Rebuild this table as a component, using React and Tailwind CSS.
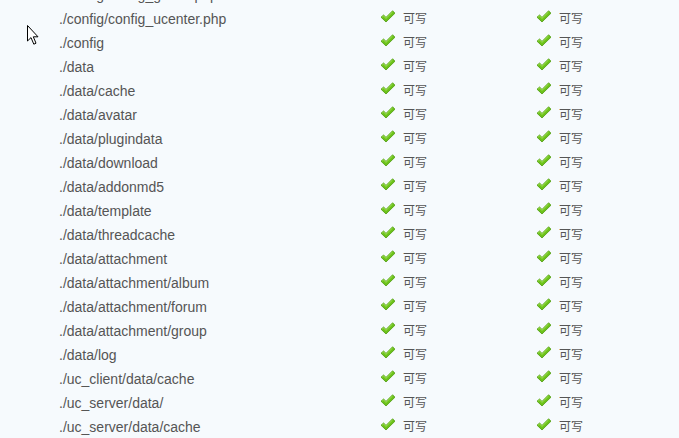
const ROWS = [
  "./config/config_global.php",
  "./config/config_ucenter.php",
  "./config",
  "./data",
  "./data/cache",
  "./data/avatar",
  "./data/plugindata",
  "./data/download",
  "./data/addonmd5",
  "./data/template",
  "./data/threadcache",
  "./data/attachment",
  "./data/attachment/album",
  "./data/attachment/forum",
  "./data/attachment/group",
  "./data/log",
  "./uc_client/data/cache",
  "./uc_server/data/",
  "./uc_server/data/cache",
];

function Check() {
  return (
    <svg width="16" height="13" viewBox="0 0 16 13" className="-mt-[5px] shrink-0">
      <path
        d="M1 7.2 L3.6 5 L6 7.4 L12.6 0.8 L15 3.2 L6 12 Z"
        fill="#6cc21a"
        stroke="#4f9a10"
        strokeWidth="0.8"
        strokeLinejoin="round"
      />
      <path d="M2.2 7.1 L3.6 6 L6 8.4 L12.6 1.9" fill="none" stroke="#a6e45a" strokeWidth="0.9" />
    </svg>
  );
}

function Status() {
  return (
    <div className="flex items-center gap-[7px] text-[12px]">
      <Check />
      <span>可写</span>
    </div>
  );
}

export default function App() {
  return (
    <div
      className="relative h-[438px] w-[679px] overflow-hidden bg-[#f6fafd] text-[14px] text-[#555]"
      style={{ fontFamily: '"Liberation Sans", "Noto Sans CJK SC", sans-serif' }}
    >
      {/* mouse pointer */}
      <svg className="absolute left-[27px] top-[25px]" width="14" height="21" viewBox="0 0 14 21">
        <path
          d="M0.5 0.5 L0.5 16 L4 12.6 L6.8 19.2 L9 18.2 L6.3 11.8 L11 11.8 Z"
          fill="#fff"
          stroke="#000"
          strokeWidth="1"
          strokeLinejoin="miter"
        />
      </svg>

      <div className="-mt-[17px] flex flex-col">
        {ROWS.map((path) => (
          <div key={path} className="flex h-[24px] items-center">
            <div className="w-[380px] pl-[59px]">{path}</div>
            <div className="w-[156px]">
              <Status />
            </div>
            <div>
              <Status />
            </div>
          </div>
        ))}
      </div>
    </div>
  );
}
